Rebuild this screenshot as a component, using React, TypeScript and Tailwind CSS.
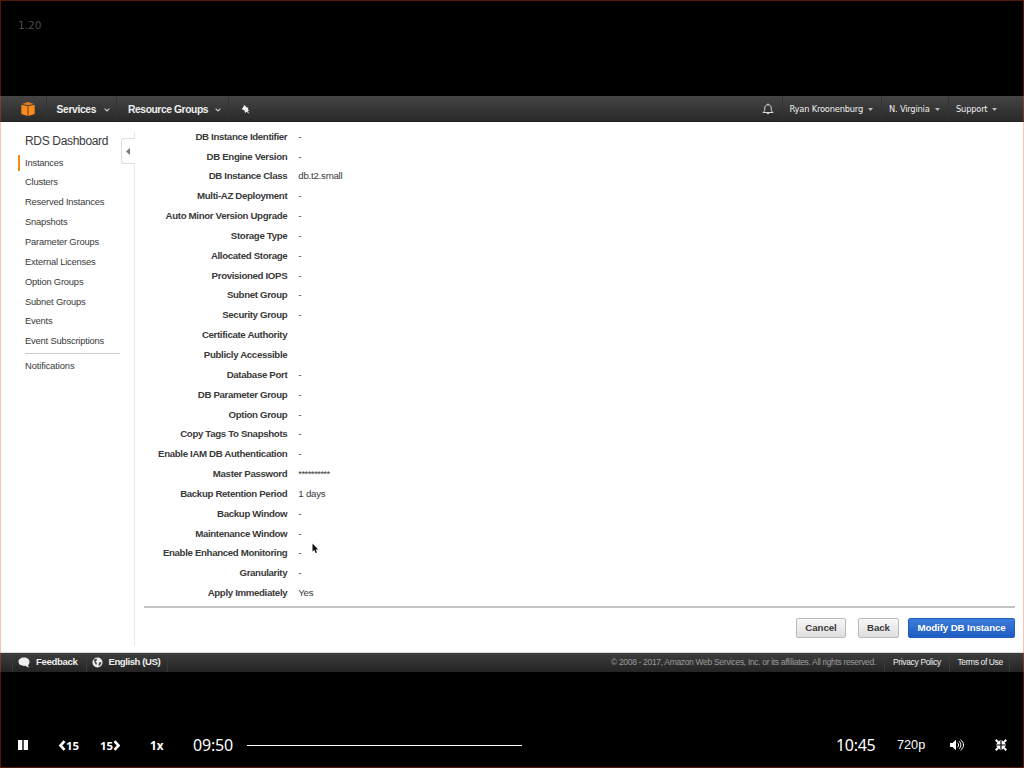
import React from 'react';

const rows: [string, string][] = [
  ['DB Instance Identifier', '-'],
  ['DB Engine Version', '-'],
  ['DB Instance Class', 'db.t2.small'],
  ['Multi-AZ Deployment', '-'],
  ['Auto Minor Version Upgrade', '-'],
  ['Storage Type', '-'],
  ['Allocated Storage', '-'],
  ['Provisioned IOPS', '-'],
  ['Subnet Group', '-'],
  ['Security Group', '-'],
  ['Certificate Authority', ''],
  ['Publicly Accessible', ''],
  ['Database Port', '-'],
  ['DB Parameter Group', '-'],
  ['Option Group', '-'],
  ['Copy Tags To Snapshots', '-'],
  ['Enable IAM DB Authentication', '-'],
  ['Master Password', '**********'],
  ['Backup Retention Period', '1 days'],
  ['Backup Window', '-'],
  ['Maintenance Window', '-'],
  ['Enable Enhanced Monitoring', '-'],
  ['Granularity', '-'],
  ['Apply Immediately', 'Yes'],
];

const nav = [
  'Instances', 'Clusters', 'Reserved Instances', 'Snapshots', 'Parameter Groups',
  'External Licenses', 'Option Groups', 'Subnet Groups', 'Events', 'Event Subscriptions',
];

function Chevron({ className }: { className: string }) {
  return (
    <svg viewBox="0 0 6 4" className={`h-1 w-1.5 shrink-0 ${className}`} fill="none" stroke="#ccc" strokeWidth="1.1">
      <path d="M.6 .6 3 3 5.4 .6" />
    </svg>
  );
}

function Caret({ className }: { className: string }) {
  return (
    <svg viewBox="0 0 5 3" className={`h-[3px] w-[5px] shrink-0 ${className}`} fill="#bbb">
      <path d="M0 0h5L2.5 3z" />
    </svg>
  );
}

function TopBar() {
  return (
    <header className="flex h-[26px] shrink-0 items-center border-b border-[#222] bg-linear-to-b from-[#464546] to-[#2a292a] text-[#eee]">
      <div className="flex h-full w-[47px] items-center border-r border-[#343334] pl-[21px]">
        <svg viewBox="0 0 14 14" className="h-3.5 w-3.5">
          <path d="M1 1.900 7 .1l6 1.800L7 3.300z" fill="#e57b17" />
          <path d="M.3 3 6.600 4v9.900L.3 11.900z" fill="#fb8a1c" />
          <path d="M13.700 3 7.400 4v9.900l6.300-2z" fill="#fb8a1c" />
        </svg>
      </div>
      <div className="flex h-full w-[70px] items-center border-r border-[#343334] pl-[9.500px] pt-[2px]">
        <span className="w-[40px] whitespace-nowrap font-['Liberation_Sans',sans-serif] text-[10.300px] font-bold tracking-[-0.350px]">Services</span>
        <Chevron className="ml-[7px]" />
      </div>
      <div className="flex h-full w-[112px] items-center border-r border-[#343334] pl-[11px] pt-[2px]">
        <span className="w-[80px] whitespace-nowrap font-['Liberation_Sans',sans-serif] text-[10.300px] font-bold tracking-[-0.420px]">Resource Groups</span>
        <Chevron className="ml-[7px]" />
      </div>
      <svg viewBox="0 0 10 10" className="ml-3 mt-px h-[9px] w-[9px]" fill="#eee">
        <path d="M3.500 0 6 2.200 8.200 3.200 7.600 4.700 9.200 6.400 7.300 6.600 9.600 9.900 6 7.500 4.500 8.900 3.900 6 .4 4.500 2 3.300z" />
      </svg>
      <div className="ml-auto flex h-full items-center font-['DejaVu_Sans',sans-serif] text-[8.300px] tracking-[-0.200px]">
        <svg viewBox="0 0 12 12" className="mr-2 h-3 w-3" fill="none" stroke="#ddd" strokeWidth="1">
          <path d="M1 9.500C2.700 8 2.700 7 2.800 5 2.900 2.800 4 1.800 6 1.800S9.100 2.800 9.200 5c.1 2 .1 3 1.800 4.500zM6 .5v1.300M4.700 9.700c.2 1.500 2.400 1.500 2.600 0" />
        </svg>
        <div className="flex h-full w-[99px] items-center border-l border-[#343334] pl-[6.500px] pt-px">
          <span className="w-[73px] whitespace-nowrap">Ryan Kroonenburg</span>
          <Caret className="ml-[5px]" />
        </div>
        <div className="flex h-full w-[67px] items-center border-l border-[#343334] pl-[7px] pt-px">
          <span className="w-[41px] whitespace-nowrap">N. Virginia</span>
          <Caret className="ml-[5px]" />
        </div>
        <div className="flex h-full w-[76px] items-center border-l border-[#343334] pl-[7px] pt-px">
          <span className="w-[31px] whitespace-nowrap">Support</span>
          <Caret className="ml-[5px]" />
        </div>
      </div>
    </header>
  );
}

function Sidebar() {
  return (
    <aside className="w-[121px] shrink-0 pt-[11px] font-['Liberation_Sans',sans-serif] text-[#3a3a3a]">
      <h1 className="h-[19.600px] whitespace-nowrap pl-[25px] text-[12px] leading-[17px] tracking-[-0.330px]">RDS Dashboard</h1>
      <ul className="text-[9.400px] leading-[19.870px] tracking-[-0.200px]">
        {nav.map((n, i) => (
          <li key={n} className="flex h-[19.870px] items-center whitespace-nowrap pl-[18px]">
            <span className={i === 0 ? 'mr-[5px] h-4 w-0.5 bg-[#f58a1f]' : 'mr-[5px] w-0.5'} />
            {n}
          </li>
        ))}
      </ul>
      <div className="mt-[1.400px] ml-[25px] w-[95px] border-t border-[#ccc] pt-[2px] text-[9.400px] leading-[20px] tracking-[-0.120px]">Notifications</div>
    </aside>
  );
}

function Main() {
  return (
    <main className="flex min-w-0 flex-1">
      <div className="flex h-[524px] w-[14px] shrink-0 flex-col self-start pt-[10px]">
        <div className="ml-[13px] h-[6px] w-px bg-[#e8e8e8]" />
        <div className="flex h-[26px] items-center rounded-l-[3px] border border-r-0 border-[#ddd]">
          <svg viewBox="0 0 4 7" className="ml-1 h-[7px] w-1" fill="#777"><path d="M4 0v7L0 3.500z" /></svg>
        </div>
        <div className="ml-[13px] w-px flex-1 bg-[#e8e8e8]" />
      </div>
      <div className="flex flex-1 flex-col pl-[9px] pr-[9px] font-['Liberation_Sans',sans-serif] text-[9.700px] text-[#3a3a3a]">
        <dl className="pt-[5.100px]">
          {rows.map(([k, v]) => (
            <div key={k} className="flex h-[19.850px] items-center whitespace-nowrap">
              <dt className="w-[143.300px] text-right font-bold tracking-[-0.350px]">{k}</dt>
              <dd className={v.startsWith('*') ? 'pl-[11px] tracking-[-0.640px]' : 'pl-[11px] tracking-[-0.250px]'}>{v}</dd>
            </div>
          ))}
        </dl>
        <div className="mt-[2.400px] border-t-2 border-[#c4c4c4]" />
        <div className="mt-2.5 flex justify-end font-bold">
          <button className="h-5 w-[50px] rounded-[2px] border border-[#bbb] bg-linear-to-b from-[#f8f8f8] to-[#dedede] pt-px tracking-[-0.050px]">Cancel</button>
          <button className="ml-3 h-5 w-[41px] rounded-[2px] border border-[#bbb] bg-linear-to-b from-[#f8f8f8] to-[#dedede] pt-px tracking-[-0.100px]">Back</button>
          <button className="ml-[9px] h-5 w-[107px] whitespace-nowrap rounded-[2px] border border-[#1e60b8] bg-linear-to-b from-[#3d7bdc] to-[#1d5cc0] pt-px tracking-[-0.100px] text-white">Modify DB Instance</button>
        </div>
      </div>
    </main>
  );
}

function Footer() {
  return (
    <footer className="flex h-[19px] shrink-0 items-center bg-linear-to-b from-[#3f3e3f] to-[#252425] font-['Liberation_Sans',sans-serif] text-[8.500px] text-[#eee]">
      <div className="h-full w-[13px] border-r border-[#3c3b3c]" />
      <div className="flex h-full w-[73px] items-center pl-[5px] text-[9.600px] font-bold tracking-[-0.350px]">
        <svg viewBox="0 0 12 11" className="mr-[6px] h-[11px] w-3" fill="#eee"><path d="M6 .5C2.800.500.500 2.300.500 4.700s2.300 4.200 5.500 4.200l1.500-.1c.8.900 2 1.500 3.700 1.600-.8-.8-1.100-1.600-1.100-2.400 1-.8 1.400-2 1.400-3.300C11.500 2.300 9.200.5 6 .5z" /></svg>
        Feedback
      </div>
      <div className="flex h-full w-[82px] items-center whitespace-nowrap border-x border-[#3c3b3c] pl-[5px] text-[9.600px] font-bold tracking-[-0.450px]">
        <svg viewBox="0 0 11 11" className="mr-[5.500px] h-[11px] w-[11px]">
          <circle cx="5.500" cy="5.500" r="5" fill="#eee" />
          <path d="M2 2.500 4.500 1.500 5 3 3.500 4.500 5 6 4.200 8 2.500 5.500zM7 5.500 9.500 5 8.500 8 6.500 9z" fill="#444" />
        </svg>
        English (US)
      </div>
      <div className="ml-auto flex h-full items-center whitespace-nowrap">
        <span className="w-[273px] tracking-[-0.330px] text-[#999]">© 2008 - 2017, Amazon Web Services, Inc. or its affiliates. All rights reserved.</span>
        <span className="flex h-full w-[65px] items-center border-l border-[#3c3b3c] pl-[8px] tracking-[-0.350px]">Privacy Policy</span>
        <span className="flex h-full w-[61px] items-center border-x border-[#3c3b3c] pl-[7.500px] tracking-[-0.400px]">Terms of Use</span>
        <span className="w-[14px]" />
      </div>
    </footer>
  );
}

function Controls() {
  return (
    <div className="mt-[53px] flex h-10 items-center font-['Noto_Sans',sans-serif] text-white">
      <svg viewBox="0 0 10 10" className="ml-[18px] h-2.5 w-2.5" fill="#fff"><path d="M0 0h4.300v10H0zM5.700 0h4.300v10H5.700z" /></svg>
      <div className="ml-[30px] flex w-[42px] items-center text-[11.400px] font-bold">
        <svg viewBox="0 0 8 11" className="mt-px h-[11px] w-2" fill="none" stroke="#fff" strokeWidth="2.600"><path d="M6.500 1.200 2.500 5.500 6.500 9.800" /></svg>
        <span className="pt-[2px]">15</span>
      </div>
      <div className="flex w-[50px] items-center text-[11.400px] font-bold">
        <span className="pt-[2px]">15</span>
        <svg viewBox="0 0 8 11" className="mt-px h-[11px] w-2" fill="none" stroke="#fff" strokeWidth="2.600"><path d="M1.500 1.200 5.500 5.500 1.500 9.800" /></svg>
      </div>
      <span className="w-[43px] pt-[2px] text-[11.700px] font-bold">1x</span>
      <span className="w-[54px] text-[16px] tracking-[-0.200px]">09:50</span>
      <div className="h-px w-[275px] bg-white" />
      <span className="ml-[314px] w-[61px] text-[16px] tracking-[-0.300px]">10:45</span>
      <span className="w-[53px] pt-px font-['Liberation_Sans',sans-serif] text-[12.700px]">720p</span>
      <svg viewBox="0 0 14 12" className="h-3 w-3.5" fill="#fff">
        <path d="M0 4h2.500L6 .8v10.400L2.500 8H0z" />
        <path d="M7.500 3.700c1.500 1.300 1.500 3.300 0 4.600M9 2.200c2.500 2 2.500 5.600 0 7.600M10.500.8c4 3 4 7.400 0 10.400" fill="none" stroke="#fff" strokeWidth="1" />
      </svg>
      <svg viewBox="0 0 12 12" className="ml-[31px] h-3 w-3" fill="#fff">
        <path d="M5.400 5.400H.8L2.400 3.800 0 1.400 1.400 0 3.800 2.400 5.400.8zM6.600 5.400V.8L8.200 2.400 10.600 0 12 1.400 9.600 3.800 11.200 5.400zM5.400 6.600v4.600L3.800 9.600 1.400 12 0 10.600 2.400 8.200.8 6.600zM6.600 6.600h4.600L9.600 8.200 12 10.600 10.600 12 8.200 9.600 6.600 11.200z" />
      </svg>
    </div>
  );
}

export default function App() {
  return (
    <div className="relative flex h-[768px] w-[1024px] flex-col overflow-hidden bg-black">
      <div className="h-24 shrink-0 pl-[18px] pt-4 font-['DejaVu_Sans',sans-serif] text-[10.600px] leading-[18px] text-[#4a4a4a]">1.20</div>
      <TopBar />
      <div className="flex h-[531px] shrink-0 border-b border-[#ddd] bg-white">
        <Sidebar />
        <Main />
      </div>
      <Footer />
      <Controls />
      <svg viewBox="0 0 7 11" className="absolute left-[312px] top-[543px] h-[11px] w-[7px]"><path d="M.5.500v8l1.800-1.600 1.400 3.200 1.400-.6-1.400-3h2.500z" fill="#111" /></svg>
      <div className="pointer-events-none absolute inset-0 border border-[rgba(255,70,30,0.32)]" />
    </div>
  );
}
